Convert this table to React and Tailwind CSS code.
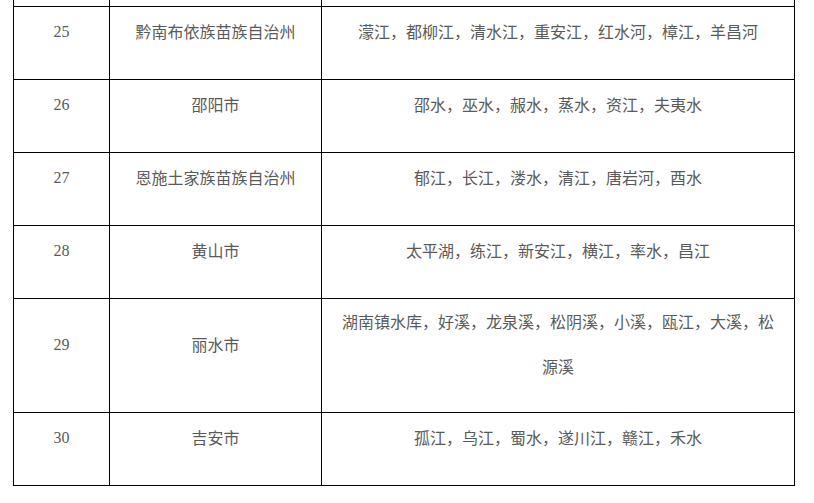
import { Fragment } from "react";

const rows = [
  { no: "25", area: "黔南布依族苗族自治州", rivers: "濛江，都柳江，清水江，重安江，红水河，樟江，羊昌河", h: "h-[73px]" },
  { no: "26", area: "邵阳市", rivers: "邵水，巫水，赧水，蒸水，资江，夫夷水", h: "h-[73px]" },
  { no: "27", area: "恩施土家族苗族自治州", rivers: "郁江，长江，溇水，清江，唐岩河，酉水", h: "h-[73px]" },
  { no: "28", area: "黄山市", rivers: "太平湖，练江，新安江，横江，率水，昌江", h: "h-[73px]" },
  { no: "29", area: "丽水市", rivers: "湖南镇水库，好溪，龙泉溪，松阴溪，小溪，瓯江，大溪，松源溪", h: "h-[114px]" },
  { no: "30", area: "吉安市", rivers: "孤江，乌江，蜀水，遂川江，赣江，禾水", h: "h-[73px]" },
];

const cjk = { fontFamily: '"Noto Sans CJK SC", "Noto Sans", sans-serif' };
const serif = { fontFamily: '"Liberation Serif", "Times New Roman", serif' };

const Cell = ({ children, className, font }) => (
  <div className={`flex flex-col justify-center border-r border-b border-black text-center ${className}`}>
    <p className="mb-[23px] text-[16px] leading-[45px] text-[#5a5a5a]" style={font}>
      {children}
    </p>
  </div>
);

const App = () => {
  return (
    <div className="w-[814px] h-[503px] bg-white overflow-hidden">
      <div className="ml-[13px] w-[781px] border-l border-black grid grid-cols-[96px_212px_473px]">
        <div className="h-[7px] border-r border-b border-black"></div>
        <div className="h-[7px] border-r border-b border-black"></div>
        <div className="h-[7px] border-r border-b border-black"></div>
        {rows.map((r) => (
          <Fragment key={r.no}>
            <Cell className={r.h} font={serif}>{r.no}</Cell>
            <Cell className={r.h} font={cjk}>{r.area}</Cell>
            <Cell className={`${r.h} px-[15px]`} font={cjk}>{r.rivers}</Cell>
          </Fragment>
        ))}
      </div>
    </div>
  );
};

export default App;
